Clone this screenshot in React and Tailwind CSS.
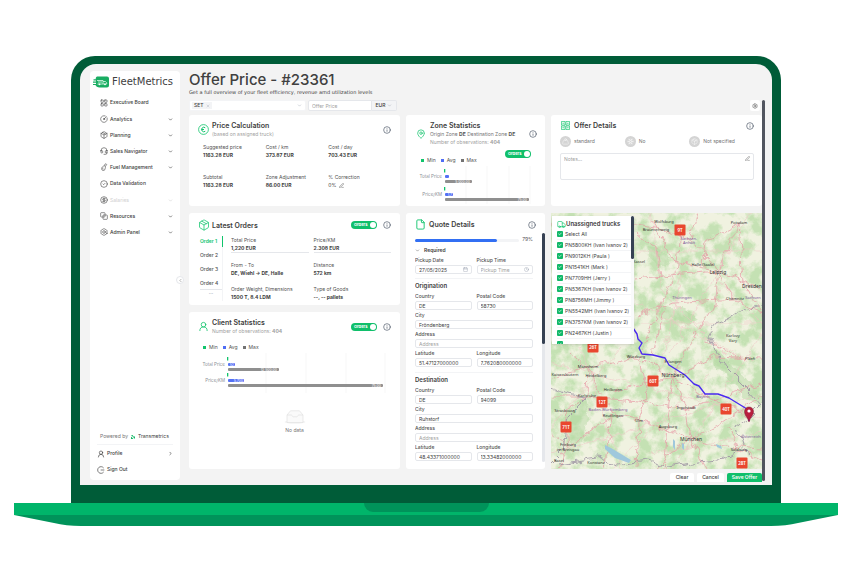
import React from 'react'
import {
  Bolt, Calendar, ChevronDown, ChevronLeft, ChevronRight, CircleCheck, CircleDollarSign, CircleGauge, Clock,
  Check, File, Headset, Info, LayoutGrid, MapPin, Package, PenLine, Settings, Truck, UserRound, Weight,
  Snowflake, X,
} from 'lucide-react'

const FuelIcon = (props) => (
  <svg viewBox="0 0 24 24" width="8" height="8" fill="none" stroke="currentColor" strokeWidth="1.750" {...props}>
    <path d="M13 8c-5 2-8 5-8 9a5 5 0 0 0 10 1c1-3 2-5 1-8ZM12 7l6-5 2 3-4 5M9 14c-1 2-1 4 1 5" />
  </svg>
)

const CopyIcon = (props) => (
  <svg viewBox="0 0 24 24" width="8" height="8" fill="none" stroke="currentColor" strokeWidth="2" {...props}>
    <rect x="2" y="2" width="13" height="13" rx="2" />
    <path d="M9 15v5a2 2 0 0 0 2 2h9a2 2 0 0 0 2-2v-9a2 2 0 0 0-2-2h-5M9 15V9h6" />
  </svg>
)

const ExitIcon = () => (
  <svg viewBox="0 0 24 24" width="8" height="8" fill="none" stroke="currentColor" strokeWidth="2">
    <path d="M20 6a10 10 0 1 0 0 12M11 12h11" />
  </svg>
)

const menu = [
  { label: 'Executive Board', icon: LayoutGrid, single: true },
  { label: 'Analytics', icon: CircleGauge },
  { label: 'Planning', icon: Package },
  { label: 'Sales Navigator', icon: Headset },
  { label: 'Fuel Management', icon: FuelIcon },
  { label: 'Data Validation', icon: CircleCheck, single: true },
  { label: 'Salaries', icon: CircleDollarSign, muted: true },
  { label: 'Resources', icon: CopyIcon },
  { label: 'Admin Panel', icon: Bolt },
]

const prices = [
  ['Suggested price', '1163.28 EUR'],
  ['Cost / km', '373.87 EUR'],
  ['Cost / day', '703.43 EUR'],
  ['Subtotal', '1163.28 EUR'],
  ['Zone Adjustment', '86.00 EUR'],
]

const orderFields = [
  ['Total Price', '1,220 EUR'],
  ['Price/KM', '2.308 EUR'],
  ['From - To', 'DE, Wiehl → DE, Halle'],
  ['Distance', '572 km'],
  ['Order Weight, Dimensions', '1500 T, 8.4 LDM'],
  ['Type of Goods', '--, -- pallets'],
]

const trucks = [
  'PN5800KH (Ivan Ivanov 2)',
  'PN9012KH (Paula )',
  'PN1541KH (Mark )',
  'PN7709HH (Jerry )',
  'PN5367KH (Ivan Ivanov 2)',
  'PN8756MH (Jimmy )',
  'PN5542MH (Ivan Ivanov 2)',
  'PN3757KM (Ivan Ivanov 2)',
  'PN2467KH (Justin )',
]

const mapLabels = [
  [113, 10, 'Wolfsburg'], [105, 18, 'Braunschweig'], [152, 53, 'Halle (Saale)'], [167, 61, 'Leipzig', 5],
  [188, 11, 'Potsdam'], [201, 75, 'Dresden', 5], [184, 87, 'Chemnitz'], [182, 124, 'Karlovy'], [182, 129, 'Vary'],
  [88, 50, 'Kassel'], [85, 145, 'Würzburg'], [122, 150, 'Erlangen'], [122, 164, 'Nürnberg', 5], [37, 155, 'Mannheim'],
  [45, 164, 'Heidelberg'], [14, 163, 'Kaiserslautern'], [62, 178, 'Heilbronn'], [36, 184, 'Karlsruhe'],
  [62, 204, 'Reutlingen'], [14, 199, 'Strasbourg'], [88, 209, 'Ulm'], [117, 215, 'Augsburg'], [140, 228, 'München', 5],
  [135, 196, 'Ingolstadt'], [17, 233, 'Freiburg'], [17, 238, 'im Breisgau'], [199, 147, 'Plzeň'],
  [188, 238, 'Salzburg'], [8, 249, 'Basel'], [45, 251, 'Konstanz'],
]

const regionLabels = [
  [138, 27, 'Sachsen-'], [138, 31, 'Anhalt'], [131, 86, 'Thüringen'], [57, 198, 'Baden-Württemberg'],
  [152, 185, 'Bayern'], [200, 225, 'Österreich'], [202, 86, 'Sachsen'],
]

const mapTags = [
  [129, 17, '9T'], [42, 134, '26T'], [102, 168, '60T'], [51, 189, '12T'], [175, 196, '40T'], [15, 214, '71T'], [191, 250, '28T'],
]

const Card = ({ className = '', children }) => (
  <section className={`rounded-[3px] bg-white ${className}`}>{children}</section>
)

const InfoButton = () => (
  <button aria-label="Info" className="shrink-0 text-gray-600">
    <Info size={8} strokeWidth={2} />
  </button>
)

const OrdersSwitch = () => (
  <label className="flex h-2 w-[26px] shrink-0 items-center justify-between rounded-full bg-[#10bf6b] pr-px pl-[3px] text-[4px] leading-none font-bold text-white">
    <input type="checkbox" role="switch" defaultChecked className="sr-only" />
    Orders
    <span className="size-[6px] rounded-full bg-white"></span>
  </label>
)

const CardHeader = ({ icon, title, subtitle, toggle, children }) => (
  <div className="flex items-center gap-[3px]">
    <span className="w-[11px] shrink-0 text-[#10c46c]">{icon}</span>
    <div className="min-w-0 flex-1">
      <h2 className="text-[7px] leading-[9px] font-semibold text-neutral-700">{title}</h2>
      {children}
      {subtitle && <p className="text-[5px] leading-[8px] text-neutral-400">{subtitle}</p>}
    </div>
    <div className="flex items-center gap-[6px]">
      {toggle && <OrdersSwitch />}
      <InfoButton />
    </div>
  </div>
)

const Stat = ({ label, value, children }) => (
  <div className="text-[5px] leading-[8px]">
    <div className="text-neutral-600">{label}</div>
    {value && <div className="font-bold text-neutral-700">{value}</div>}
    {children}
  </div>
)

const Legend = () => (
  <div className="flex items-center gap-[5px] text-[5px] leading-none text-neutral-600">
    {[['Min', 'bg-[#10c46c]'], ['Avg', 'bg-[#4f6df5]'], ['Max', 'bg-neutral-500']].map(([name, color]) => (
      <span key={name} className="flex items-center gap-[3px]">
        <i className={`size-[3px] ${color}`}></i>
        {name}
      </span>
    ))}
  </div>
)

const BarChart = ({ width, height, origin, grid, rows }) => (
  <svg viewBox={`0 0 ${width} ${height}`} className="w-full font-['Inter']" role="img" aria-label="Statistics">
    {grid.map((x) => (
      <line key={x} x1={x} x2={x} y1="0" y2={height} stroke="#eeeeee" strokeWidth="0.5" />
    ))}
    {rows.map((row) => (
      <g key={row.label}>
        <text x={origin - 3} y={row.y + 2} fontSize="4.500" fill="#8b8f96" textAnchor="end">{row.label}</text>
        <rect x={origin - 1} y={row.y - 7} width="1.3" height="3.5" fill="#10c46c" />
        <rect x={origin} y={row.y - 1} width={row.avg} height="3" rx="1" fill="#5470f5" />
        <rect x={origin} y={row.y + 4} width={row.max} height="3" rx="1" fill="#8f8f8f" />
        <text x={origin + row.avg - 1} y={row.y + 1.7} fontSize="3.500" fill="#fff" textAnchor="end">{row.avgText}</text>
        <text x={origin + row.max - 2} y={row.y + 6.7} fontSize="3.500" fill="#fff" textAnchor="end">{row.maxText}</text>
      </g>
    ))}
  </svg>
)

const Field = ({ id, label, value, placeholder, icon, wide }) => (
  <div className={wide ? 'col-span-2' : ''}>
    <label htmlFor={id} className="block text-[5px] leading-[10px] font-medium text-neutral-600">{label}</label>
    <div className="flex h-[9px] items-center rounded-[2px] border border-gray-200 px-[3px]">
      <input
        id={id}
        defaultValue={value}
        placeholder={placeholder}
        className="w-full min-w-0 text-[5px] leading-none text-neutral-700 outline-none placeholder:text-neutral-400"
      />
      {icon}
    </div>
  </div>
)

const Place = ({ name, prefix, country, code, city, lat, lng }) => (
  <div>
    <h3 className="pt-[2px] text-[6px] leading-[10px] font-semibold text-neutral-700">{name}</h3>
    <div className="grid grid-cols-2 gap-x-[5px]">
      <Field id={`${prefix}-country`} label="Country" value={country} />
      <Field id={`${prefix}-code`} label="Postal Code" value={code} />
      <Field id={`${prefix}-city`} label="City" value={city} wide />
      <Field id={`${prefix}-address`} label="Address" placeholder="Address" wide />
      <Field id={`${prefix}-lat`} label="Latitude" value={lat} />
      <Field id={`${prefix}-lng`} label="Longitude" value={lng} />
    </div>
  </div>
)

const Sidebar = () => (
  <aside className="flex w-[90px] shrink-0 flex-col rounded-[4px] bg-white pt-[3px]">
    <a href="#home" className="flex h-[15px] items-center gap-[3px] pl-[3px]">
      <svg viewBox="0 0 16 12" className="h-3 w-4 shrink-0">
        <path d="M4 .5h10a2 2 0 0 1 2 2v7a2 2 0 0 1-2 2H6.500C4.500 11.500 3 10.500 2.500 9H0V8h3V6.800H0V5.600h3V4.500H.5V3.300h2.200C2.800 1.500 3 1 4 .5Z" fill="#19ad62" />
        <path d="M4 4.500h6v3.500H4.500M10 5.500h2.500l1.200 1.300V8H10M5 6h4" fill="none" stroke="#d9f7e6" strokeWidth=".8" />
        <circle cx="6.500" cy="8.300" r=".9" fill="#fff" />
        <circle cx="12" cy="8.300" r=".9" fill="#fff" />
      </svg>
      <span className="font-['DejaVu_Sans',sans-serif] text-[10px] leading-none text-neutral-700">FleetMetrics</span>
    </a>
    <nav className="mt-[5px] pr-[7px] pl-[10px]">
      {menu.map(({ label, icon: Icon, single, muted }) => (
        <a
          key={label}
          href="#menu"
          className={`flex items-center gap-[2px] text-[5px] leading-none font-medium ${single ? 'h-[17px]' : 'h-4'} ${muted ? 'text-neutral-300' : 'text-neutral-700'}`}
        >
          <Icon size={8} strokeWidth={1.75} className="text-neutral-700" />
          <span className="flex-1">{label}</span>
          {!single && <ChevronDown size={5} strokeWidth={3} />}
        </a>
      ))}
    </nav>
    <div className="mt-auto px-[7px]">
      <div className="flex items-center gap-[3px] border-b border-gray-100 pb-1 pl-[3px] text-[5px] leading-[7px] text-neutral-500">
        Powered by
        <svg viewBox="0 0 8 8" className="size-1">
          <path d="M0 0 8 8V2L6 4 3 0ZM0 3l5 5H0Z" fill="#10b865" />
        </svg>
        <span className="text-neutral-700">Transmetrics</span>
      </div>
      <a href="#profile" className="flex h-[17px] items-center gap-[2px] text-[5px] font-medium text-neutral-700">
        <UserRound size={8} strokeWidth={2} />
        <span className="flex-1">Profile</span>
        <ChevronRight size={5} strokeWidth={3} />
      </a>
      <a href="#signout" className="mb-[2px] flex h-4 items-center gap-[2px] text-[5px] font-medium text-neutral-700">
        <ExitIcon />
        Sign Out
      </a>
    </div>
  </aside>
)

const TruckPanel = () => (
  <div className="absolute top-[3px] left-[1px] flex h-[128px] w-[82px] overflow-hidden bg-white shadow">
    <div className="min-w-0 flex-1 pt-[3px] pl-[5px]">
      <h2 className="flex h-[10px] items-center text-[6px] leading-none font-semibold whitespace-nowrap text-neutral-700">
        <Truck size={9} strokeWidth={1.75} className="shrink-0 text-[#10c46c]" />
        Unassigned trucks
      </h2>
      {['Select All', ...trucks, ''].map((name) => (
        <label key={name} className="flex h-[11px] items-center gap-[2px] border-b border-gray-100 text-[5px] leading-none whitespace-nowrap text-neutral-700">
          <span className="grid size-[6px] shrink-0">
            <input type="checkbox" aria-label={name || 'Truck'} defaultChecked className="col-start-1 row-start-1 size-[6px] appearance-none rounded-[1px] bg-[#10b868]" />
            <Check size={4} strokeWidth={4} className="col-start-1 row-start-1 place-self-center text-white" />
          </span>
          {name}
        </label>
      ))}
    </div>
    <div className="w-[3px] shrink-0 bg-gray-50">
      <div className="h-[43px] rounded-full bg-gray-700"></div>
    </div>
  </div>
)

const RouteMap = () => (
  <div className="relative overflow-hidden">
    <svg viewBox="0 0 211 256" preserveAspectRatio="xMidYMid slice" className="size-full font-['Noto_Sans']">
      <defs>
        <filter id="forest" x="0" y="0" width="100%" height="100%" colorInterpolationFilters="sRGB">
          <feTurbulence type="fractalNoise" baseFrequency="0.07" numOctaves="5" seed="8" />
          <feColorMatrix values="0 0 0 0 0.7  0 0 0 0 0.86  0 0 0 0 0.63  0 4 0 0 -1.6" />
        </filter>
        <filter id="wobble" x="0" y="0" width="100%" height="100%" colorInterpolationFilters="sRGB">
          <feTurbulence type="fractalNoise" baseFrequency="0.09" numOctaves="3" seed="3" />
          <feDisplacementMap in="SourceGraphic" scale="10" xChannelSelector="R" yChannelSelector="G" />
        </filter>
      </defs>
      <rect width="211" height="256" fill="#f0f2e0" />
      <rect width="211" height="256" filter="url(#forest)" opacity=".7" />
      <g fill="#b0d79f" opacity=".45" filter="url(#wobble)">
        <path d="M95 33l14 2 10 11-5 7-15-6Z" />
        <path d="M24 190l10-4 4 12-6 28-12 8-4-14Z" />
        <path d="M164 137l16 12 20 22 11 12v14l-22-20-24-20Z" />
        <path d="M110 92l25 5 12 10-12 4-28-8Z" />
      </g>
      <g fill="none" stroke="#e79aa5" strokeWidth=".7" filter="url(#wobble)">
        <path d="M0 12 60 8l50 8 30 12 28 30 43 18M168 58l20-48M168 58l-4 34-24 36-18 36M168 58 120 62 84 66M129 17l-4 44-20 40-16 42M168 58l-45-10-22-40" />
        <path d="M37 154l48-10 37 20 32 18 44 22M37 154l8 20 17 26 26 8 52 18 22 6 49 4M122 164l14 32 4 30M89 144l6 40-7 24-2 48M0 164l37-10-1 30-23 14 4 35-9 23" />
        <path d="M62 178l60-14 42-20 47 2M37 184l50 4 48 8 76-26M140 226l-24 16-10 14M140 226l28-14 43-30M140 226l16 30M117 214l-4 42M0 220l17 13 45-30M152 53l2-25 34-18M184 86l-62 4-34 12M211 100l-27-14-16-26" />
        <path d="M84 20l22 14 4 30M148 0l-8 26M20 140l17 14M122 164l-6 52M154 128l42 20M188 10l4 60 19 30M62 203l-9 53M0 184l36 0M102 142l12-50M178 212l10 26 23 10" />
      </g>
      <g fill="none" stroke="#f1c0c4" strokeWidth=".5" filter="url(#wobble)">
        <path d="M84 38h127M100 0l12 80 60 60M90 110h121M0 150l211 54M30 134l40 122M70 134l-70 80M200 0l-80 140M211 120l-90 136M0 240l211-60M160 60l51 50M84 90l120 60M130 60l-20 100M100 240l111-20M60 256l100-96" />
      </g>
      <g fill="none" stroke="#a198a6" strokeWidth=".9" filter="url(#wobble)">
        <path d="M211 92l-20 4-12 8-14 6-8 10 8 20 10 14 24 24 12 14-14 14-12 8 6 20" />
        <path d="M0 176l20 6 16 2-20 20-4 34-12 12M8 250l38-6 20 8 30-4 20 6 40-6 18-2 14-10 10 8" />
      </g>
      <path d="M54 232l6 3 10 6 10 6-2 3-14-5-10-9ZM122 226l2 2v9l-2-3ZM131 230l2 1v6l-2-2ZM165 231l5 2 1 3-5-2Z" fill="#9fc8dc" />
      <path
        d="M82 115l4 6 1 5 4 4-3 5 3 6 11 1 12 3 4 7 8 5 8 5 9 9 5 2 6 8h13l11 4 18 11 2 12"
        fill="none" stroke="#4a2af0" strokeWidth="1.4" strokeLinejoin="round"
      />
      <g textAnchor="middle">
        {mapLabels.map(([x, y, name, size]) => (
          <text key={name} x={x} y={y} fontSize={size || 4} fill="#2f2f2f">{name}</text>
        ))}
        {regionLabels.map(([x, y, name]) => (
          <text key={name} x={x} y={y} fontSize="4" fill="#80589a">{name}</text>
        ))}
      </g>
      {mapTags.map(([x, y, name]) => (
        <g key={name}>
          <rect x={x - 5.5} y={y - 5.5} width="11" height="11" rx="1" fill="#e9472f" />
          <text x={x} y={y + 1.7} fontSize="4.500" fontWeight="600" fill="#fff" textAnchor="middle">{name}</text>
        </g>
      ))}
      <path d="M198 209c-1-5-4.500-6-4.500-10.500a4.500 4.500 0 0 1 9 0c0 4.500-3.500 5.500-4.500 10.500Z" fill="#b81f3d" stroke="#7d1630" strokeWidth=".5" />
      <circle cx="198" cy="198" r="1.600" fill="#fff" />
    </svg>
    <TruckPanel />
  </div>
)

const Toolbar = () => (
  <div className="mt-[3px] flex h-[11px] items-stretch text-[5px] leading-none">
    <button aria-label="Order type" className="flex w-[117px] items-center justify-between rounded-[2px] border border-gray-100 bg-white pr-[3px] pl-[2px]">
      <span className="flex items-center gap-[2px] bg-gray-100 px-[2px] py-px font-medium text-neutral-700">
        SET <X size={4} className="text-gray-400" />
      </span>
      <ChevronDown size={5} className="text-gray-400" />
    </button>
    <input
      aria-label="Offer Price"
      placeholder="Offer Price"
      className="ml-[2px] w-16 rounded-l-[2px] border border-gray-200 bg-white px-[3px] outline-none placeholder:text-neutral-400"
    />
    <button className="flex w-[25px] items-center justify-center gap-[2px] rounded-r-[2px] border border-l-0 border-gray-200 bg-gray-100 font-medium text-neutral-700">
      EUR <ChevronDown size={5} className="text-gray-400" />
    </button>
    <button aria-label="Settings" className="mr-[2px] ml-auto grid w-[10px] place-items-center rounded-[2px] bg-white text-neutral-600">
      <Settings size={6} />
    </button>
  </div>
)

const PriceCard = () => (
  <Card className="px-[9px] pt-[6px]">
    <CardHeader
      icon={
        <svg viewBox="0 0 22 22" className="size-[11px]" fill="none" stroke="currentColor" strokeWidth="1.600">
          <circle cx="11" cy="11" r="9.800" />
          <path d="M14.500 7.500a4.500 4.500 0 1 0 0 7M7 11h5" strokeWidth="2" />
        </svg>
      }
      title="Price Calculation"
      subtitle="(based on assigned truck)"
    />
    <div className="mt-[5px] grid grid-cols-3 gap-y-[14px] pl-[5px]">
      {prices.map(([label, value]) => <Stat key={label} label={label} value={value} />)}
      <Stat label="% Correction">
        <div className="flex items-center gap-[3px] text-neutral-700">
          0% <PenLine size={5} />
        </div>
      </Stat>
    </div>
  </Card>
)

const ZoneCard = () => (
  <Card className="px-2 pt-[6px]">
    <div className="pl-[2px]">
      <CardHeader
        icon={<MapPin size={10} strokeWidth={1.75} />}
        title="Zone Statistics"
        subtitle={<>Number of observations: <b>404</b></>}
      >
        <p className="text-[5px] leading-[8px] whitespace-nowrap text-neutral-500">
          Origin Zone <b className="text-neutral-600">DE</b> Destination Zone <b className="text-neutral-600">DE</b>
        </p>
      </CardHeader>
    </div>
    <div className="mt-1 flex justify-end pr-[6px]"><OrdersSwitch /></div>
    <div className="pl-[7px]"><Legend /></div>
    <div className="mt-[3px]">
      <BarChart
        width={123}
        height={38}
        origin={31}
        grid={[52, 73, 95, 116]}
        rows={[
          { label: 'Total Price', y: 10, avg: 4, avgText: '', max: 27, maxText: '5,000.00' },
          { label: 'Price/KM', y: 28, avg: 8, avgText: '1.7', max: 84, maxText: '75.00' },
        ]}
      />
    </div>
  </Card>
)

const OfferCard = () => (
  <Card className="pt-[6px] pr-2 pl-[9px]">
    <CardHeader
      icon={
        <svg viewBox="0 0 20 20" className="ml-px size-[9px]" fill="none" stroke="currentColor" strokeWidth="1.500">
          <path d="M1 1h8v8H1ZM11 1h8v8h-8ZM1 11h8v8H1ZM11 11h8v8h-8ZM3 5h4M13 5h4M3 15h4M13 15h4" />
        </svg>
      }
      title="Offer Details"
    />
    <div className="mt-[6px] grid grid-cols-3 text-[5px] leading-none text-neutral-500">
      {[['standard', Weight], ['No', Snowflake], ['Not specified', Package]].map(([name, Icon]) => (
        <div key={name} className="flex items-center gap-[3px] whitespace-nowrap">
          <span className="grid size-[11px] shrink-0 place-items-center rounded-full bg-neutral-300 text-white">
            <Icon size={7} strokeWidth={1.5} />
          </span>
          {name}
        </div>
      ))}
    </div>
    <div className="mt-[6px] flex h-[27px] items-start rounded-[2px] border border-gray-200 px-[3px] pt-[2px]">
      <textarea
        aria-label="Notes"
        placeholder="Notes..."
        className="h-[22px] flex-1 resize-none text-[5px] leading-[6px] outline-none placeholder:text-neutral-400"
      />
      <PenLine size={5} className="text-neutral-600" />
    </div>
  </Card>
)

const OrdersCard = () => (
  <Card className="px-[9px] pt-[6px]">
    <CardHeader icon={<Package size={12} strokeWidth={1.5} />} title="Latest Orders" toggle />
    <div className="mt-[5px] flex">
      <div className="flex w-[25px] flex-col border-r border-gray-100 pl-[2px] text-[5px] leading-none text-neutral-600">
        <button className="-mr-px h-[11px] border-r border-[#10c46c] text-left font-semibold text-[#10c46c]">Order 1</button>
        {['Order 2', 'Order 3', 'Order 4'].map((name) => (
          <button key={name} className="mt-[3px] h-[11px] text-left font-medium">{name}</button>
        ))}
        <button className="border-t border-gray-200 text-gray-400">...</button>
      </div>
      <div className="grid flex-1 grid-cols-2 gap-x-[5px] gap-y-2 pl-2">
        {orderFields.map(([label, value], i) => (
          <div key={label} className={i < 2 ? 'border-b border-gray-200' : ''}>
            <Stat label={label} value={value} />
          </div>
        ))}
      </div>
    </div>
  </Card>
)

const ClientCard = () => (
  <Card className="px-[9px] pt-[6px]">
    <CardHeader
      icon={<UserRound size={11} strokeWidth={1.75} />}
      title="Client Statistics"
      subtitle={<>Number of observations: <b>404</b></>}
      toggle
    />
    <div className="mt-[10px] pl-[5px]"><Legend /></div>
    <div className="mt-[3px]">
      <BarChart
        width={193}
        height={40}
        origin={30}
        grid={[68, 108, 148, 187]}
        rows={[
          { label: 'Total Price', y: 11, avg: 7, avgText: '52', max: 51, maxText: '12,500.00' },
          { label: 'Price/KM', y: 27, avg: 16, avgText: '5.700', max: 155, maxText: '75.00' },
        ]}
      />
    </div>
    <div className="mt-[17px] flex flex-col items-center gap-[3px] text-[5px] leading-[7px] text-neutral-500">
      <svg viewBox="0 0 22 14" className="h-[14px] w-[22px]" fill="#fafafa" stroke="#dedede" strokeWidth=".6">
        <ellipse cx="11" cy="12" rx="10.500" ry="1.800" fill="#f4f4f4" stroke="none" />
        <path d="M3 5 6.500.8h9L19 5v7.500H3Z" />
        <path d="M3 5h4.500c.6 0 .8 1.800 1.800 1.800h3.400c1 0 1.200-1.800 1.800-1.800H19" />
      </svg>
      No data
    </div>
  </Card>
)

const QuoteCard = () => (
  <Card className="row-span-2 flex flex-col pt-[6px] pl-[9px]">
    <div className="pr-[9px]">
      <CardHeader icon={<File size={11} strokeWidth={2} />} title="Quote Details" />
    </div>
    <div className="mt-[3px] flex h-[229px]">
      <div className="min-w-0 flex-1 overflow-hidden pr-[9px]">
        <div className="flex h-[14px] items-center gap-[3px] text-[5px] text-neutral-600">
          <div className="h-[3px] flex-1 rounded-full bg-gray-100">
            <div className="h-full w-[79%] rounded-full bg-[#326ff3]"></div>
          </div>
          79%
        </div>
        <button className="flex items-center gap-1 text-[5px] leading-[6px] font-semibold text-neutral-700">
          <ChevronDown size={5} /> Required
        </button>
        <div className="mt-[2px] grid grid-cols-2 gap-x-[5px] border-b border-gray-100 pb-1">
          <Field id="pickup-date" label="Pickup Date" value="27/05/2025" icon={<Calendar size={5} className="shrink-0 text-gray-400" />} />
          <Field id="pickup-time" label="Pickup Time" placeholder="Pickup Time" icon={<Clock size={5} className="shrink-0 text-gray-400" />} />
        </div>
        <Place name="Origination" prefix="from" country="DE" code="58730" city="Fröndenberg" lat="51.47127000000" lng="7.762080000000" />
        <div className="mt-[5px] border-t border-gray-100">
          <Place name="Destination" prefix="to" country="DE" code="94099" city="Ruhstorf" lat="48.43371000000" lng="13.33482000000" />
        </div>
      </div>
      <div className="w-[3px] shrink-0 rounded-full bg-gray-200">
        <div className="h-[111px] rounded-full bg-gray-700"></div>
      </div>
    </div>
  </Card>
)

export default function App() {
  return (
    <div className="min-h-screen bg-white pt-14 pr-[13px] pl-[14px] font-['Inter',sans-serif]">
      <div className="mx-[57px] rounded-t-[24px] bg-[#005c38] px-[9px] pt-2 pb-[18px]">
        <div className="relative flex gap-[9px] overflow-hidden rounded-t-[16px] bg-[#f3f3f3] pt-[7px] pr-[7px] pl-[10px]">
          <div className="mb-[5px] flex">
            <Sidebar />
          </div>
          <button aria-label="Collapse menu" className="absolute top-[212px] left-24 grid size-2 place-items-center rounded-full border border-gray-200 bg-white text-neutral-600">
            <ChevronLeft size={5} />
          </button>
          <main className="min-w-0 flex-1">
            <h1 className="mt-px text-[15px] leading-[16px] font-medium text-neutral-700">Offer Price - #23361</h1>
            <p className="font-['DejaVu_Sans',sans-serif] text-[5px] leading-[9px] text-neutral-700">
              Get a full overview of your fleet efficiency, revenue amd utilization levels
            </p>
            <div className="flex">
              <div className="min-w-0 flex-1">
                <Toolbar />
                <div className="mt-1 grid grid-cols-[211fr_139fr_211fr] grid-rows-[91px_92px_157px] gap-x-[6px] gap-y-[7px]">
                  <PriceCard />
                  <ZoneCard />
                  <OfferCard />
                  <OrdersCard />
                  <QuoteCard />
                  <div className="row-span-2 grid">
                    <RouteMap />
                  </div>
                  <ClientCard />
                </div>
                <div className="mt-1 mb-[3px] flex h-[9px] justify-end gap-[3px] text-[5px] leading-none font-medium text-neutral-700">
                  <button className="w-6 rounded-t-[2px] bg-white">Clear</button>
                  <button className="w-[27px] rounded-t-[2px] bg-white">Cancel</button>
                  <button className="w-[35px] rounded-t-[2px] bg-[#10bf6b] font-semibold text-white">Save Offer</button>
                </div>
              </div>
              <div className="mt-[3px] mb-1 w-[3px] rounded-full bg-[#51555f]"></div>
            </div>
          </main>
        </div>
      </div>
      <div className="flex h-3 justify-center bg-[#00b56a]">
        <div className="h-[9px] w-[125px] rounded-b-[9px] bg-[#00935a]"></div>
      </div>
      <svg viewBox="0 0 824 11" preserveAspectRatio="none" className="h-[11px] w-full">
        <path d="M0 0h824l-40 8q-12 3-27 3H67q-15 0-27-3Z" fill="#00935a" />
      </svg>
    </div>
  )
}
